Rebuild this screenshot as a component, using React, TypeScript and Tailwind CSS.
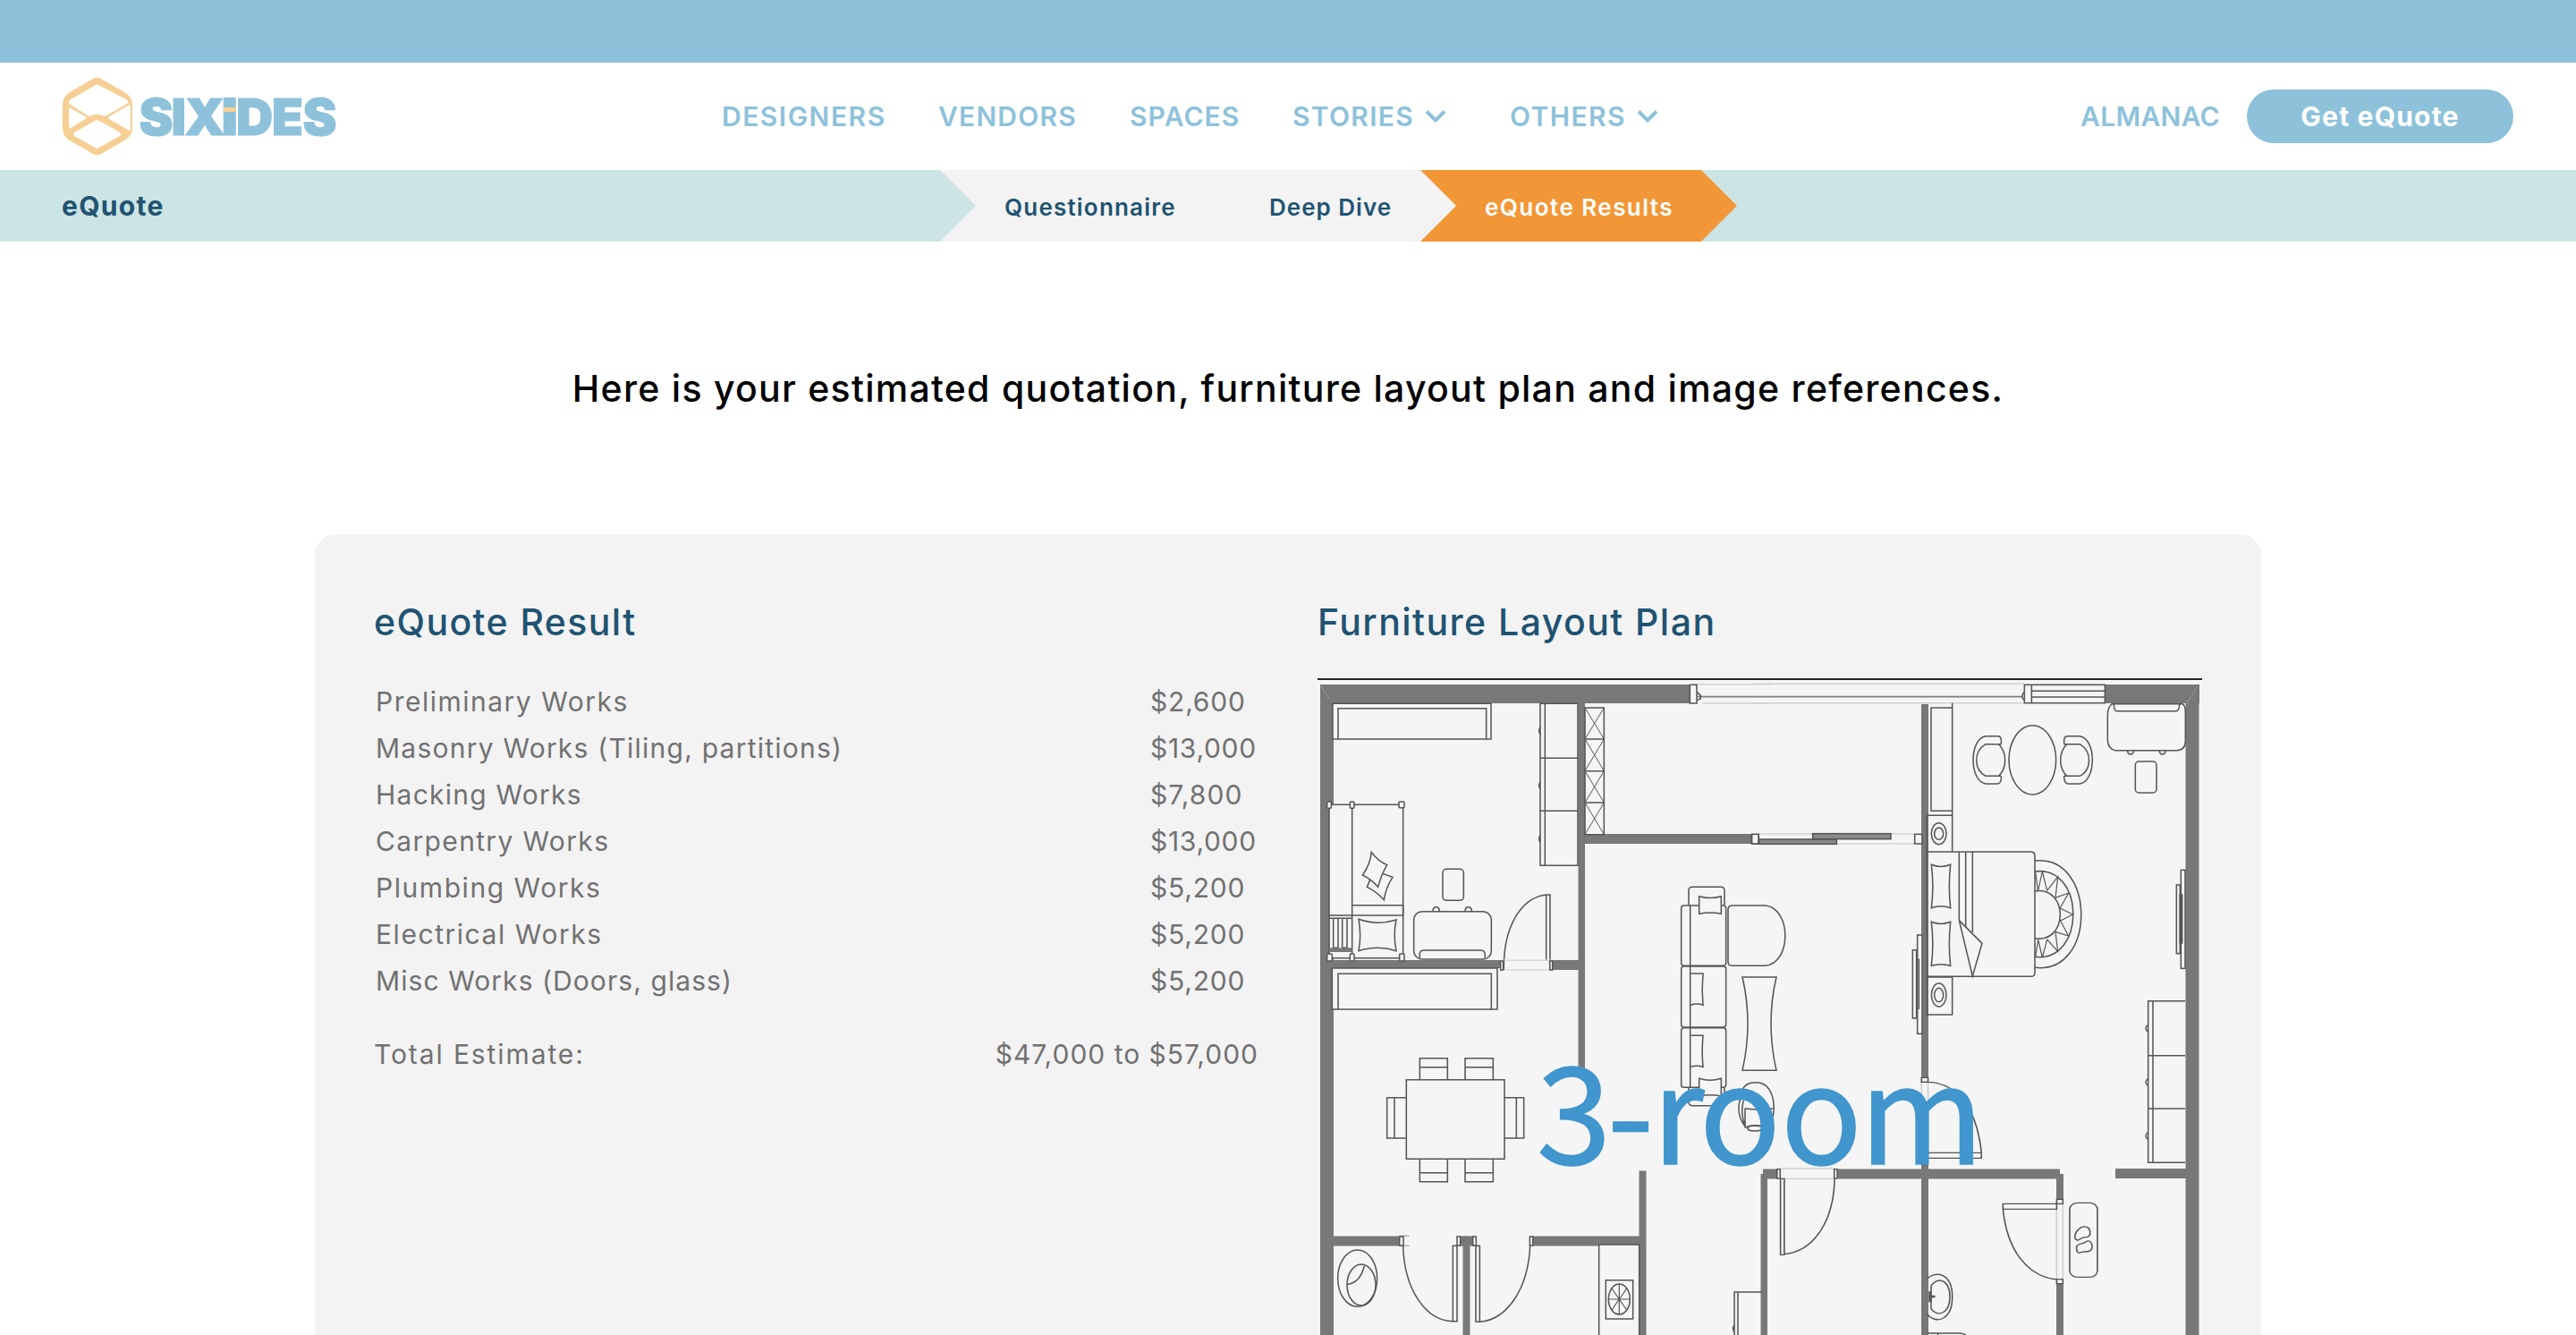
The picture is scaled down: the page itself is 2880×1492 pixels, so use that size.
import React from "react";

const works = [
  { name: "Preliminary Works", nameCls: "tracking-[1.5px]", price: "$2,600", priceCls: "tracking-[0.8px]" },
  { name: "Masonry Works (Tiling, partitions)", nameCls: "tracking-[1.23px]", price: "$13,000", priceCls: "tracking-[0.7px]" },
  { name: "Hacking Works", nameCls: "tracking-[1.25px]", price: "$7,800", priceCls: "tracking-[1.1px]" },
  { name: "Carpentry Works", nameCls: "tracking-[1.35px]", price: "$13,000", priceCls: "tracking-[0.7px]" },
  { name: "Plumbing Works", nameCls: "tracking-[1.55px]", price: "$5,200", priceCls: "tracking-[0.8px]" },
  { name: "Electrical Works", nameCls: "tracking-[1.55px]", price: "$5,200", priceCls: "tracking-[0.8px]" },
  { name: "Misc Works (Doors, glass)", nameCls: "tracking-[1.07px]", price: "$5,200", priceCls: "tracking-[0.8px]" },
];

const nav = [
  { label: "DESIGNERS", cls: "w-[242px] tracking-[1.5px]", menu: false },
  { label: "VENDORS", cls: "w-[214px] tracking-[1.2px]", menu: false },
  { label: "SPACES", cls: "w-[182px] tracking-[1.1px]", menu: false },
  { label: "STORIES", cls: "w-[243px] tracking-[1.3px]", menu: true },
  { label: "OTHERS", cls: "w-[180px] tracking-[1.4px]", menu: true },
];

function Chevron() {
  return (
    <svg width="24" height="16" viewBox="0 0 24 16" fill="none" className="ml-[12px]">
      <path d="M2 2.5 L12 12.5 L22 2.5" stroke="#8dc2da" strokeWidth="4" />
    </svg>
  );
}

function Logo() {
  return (
    <svg width="310" height="90" viewBox="70 85 310 90" className="shrink-0">
      <path
        fillRule="evenodd"
        fill="#f6cf94"
        d="M104 88 Q108.500 85.500 113 88 L140 103.500 Q148 108.500 148 117 V143 Q148 151.500 140 156.500 L113 172 Q108.500 174.500 104 172 L77 156.500 Q70 151.500 70 143 V117 Q70 108.500 77 103.500 Z
        M107 95 L79 111 Q77 112.500 77 114.500 Q77 116 79 117 L97 128.500 Q99 130.300 101.500 129.500 Q108.500 126 115.500 129.500 Q118 130.300 120 128.500 L142 116 Q144 115 143.500 113.500 Q143 112 141 111 L110 95 Q108.500 93.500 107 95 Z
        M77 122 Q77 120 79 121 L95.500 130.300 Q98 131.500 95.500 133 L80 142.500 Q77 144 77 141.500 Z
        M144 117.500 Q146 116.500 146 118.500 V144 Q146 146.500 143.500 145.500 L122 133 Q120 131.500 122 130.300 Z
        M106 135 Q108.500 133.500 111 135 L134 148 Q136 150 134 152 L110.500 165 Q108.500 167 106.500 165 L83 152 Q81 150 83 148 Z"
      />
      <text
        x="155.5 191.5 206.500 248.500 264 304 338.500"
        y="150.500"
        fill="#8dc2da"
        stroke="#8dc2da"
        strokeWidth="1.2"
        fontFamily="Inter, sans-serif"
        fontWeight="900"
        fontSize="57"
      >
        SIXiDES
      </text>
      <path d="M248.500 105 h16.500 v4 h-16.500z" fill="#fff" />
      <path d="M249.700 109 h14 v42 h-14z" fill="#8dc2da" />
      <path d="M249.700 120 h14 v5 h-14z" fill="#f6cf94" />
    </svg>
  );
}

function FloorPlan() {
  return (
    <svg width="989" height="735" viewBox="1473 757 989 735" className="mt-[33px] block">
      <rect x="1473" y="757" width="989" height="735" fill="#f5f5f5" />
      <rect x="1473" y="758" width="989" height="2" fill="#222" />

      {/* walls */}
      <g fill="#787878">
        <rect x="1476" y="765" width="418" height="21" />
        <rect x="1476" y="765" width="15" height="727" />
        <rect x="2353" y="765" width="106" height="21" />
        <rect x="2443.500" y="765" width="15" height="727" />
        <rect x="1764.500" y="786" width="7.500" height="408" />
        <rect x="1772" y="932" width="188" height="11" />
        <rect x="1490" y="1073" width="188" height="9" />
        <rect x="1736" y="1073" width="29" height="11" />
        <rect x="2148" y="787" width="8" height="420" />
        <rect x="1490" y="1381.500" width="77" height="11" />
        <rect x="1631" y="1381.500" width="17" height="11" />
        <rect x="1635.500" y="1381.500" width="8" height="111" />
        <rect x="1713" y="1381.500" width="125" height="11" />
        <rect x="1832.500" y="1308.500" width="8" height="184" />
        <rect x="1971" y="1306.500" width="17" height="11" />
        <rect x="1968.500" y="1312" width="7.500" height="180" />
        <rect x="2055" y="1306.500" width="248" height="11" />
        <rect x="2148" y="1299" width="8" height="193" />
        <rect x="2299" y="1312" width="8" height="28" />
        <rect x="2299" y="1435" width="8" height="57" />
        <rect x="2365" y="1306" width="80" height="11" />
      </g>
      <path d="M1477 767 l9 14 M2457 767 l-13 20" stroke="#9a9a9a" strokeWidth="1" />

      <g transform="translate(1460 650) scale(.333333)" fill="none" stroke="#555" strokeWidth="4.6">
        <path d="M1300 344H1560M1330 408H1560" stroke="#d2d2d2" />
        <path d="M1312 386H1500" stroke="#808080" strokeWidth="5" />
        <path d="M1312 370l12 12v10l-12 6" />
        <rect x="1288" y="346" width="23" height="62" fill="#f5f5f5" />
        <path fill="#f5f5f5" d="M90 409H621V528H90Z" />
        <path d="M108 528V425H605V528" />
        <path fill="#f5f5f5" d="M786 409H912V952H786Z" />
        <path d="M802 409V952M786 592H912M786 769H912M786 488q-8 12 0 24M786 672q-8 12 0 24M786 850q-8 12 0 24" />
        <path d="M936 423H1000V848H936ZM936 528H1000M936 635H1000M936 741H1000" />
        <path strokeWidth="3" d="M936 423L1000 528M1000 423L936 528M936 528L1000 635M1000 528L936 635M936 635L1000 741M1000 635L936 741M936 741L1000 848M1000 741L936 848" />
        <path fill="#f5f5f5" d="M78 748H326V1262H78Z" />
        <path d="M155 748V1262M155 1085H326V1119H155M78 1119H155M78 1129H155" />
        <path d="M92 1129V1228H108V1129M122 1129V1228H138V1129" />
        <rect x="80" y="1228" width="74" height="14" fill="#787878" stroke="none" />
        <g fill="#f5f5f5">
          <rect x="71" y="738" width="14" height="22" rx="3" /><rect x="148" y="738" width="14" height="22" rx="3" /><rect x="312" y="738" width="18" height="20" rx="3" />
          <rect x="71" y="1248" width="17" height="24" rx="3" /><rect x="148" y="1248" width="14" height="24" rx="3" /><rect x="314" y="1248" width="16" height="24" rx="3" />
        </g>
        <path fill="#f5f5f5" d="M215 1000L248 975L291 991Q268 1026 262 1067Q238 1040 205 1024Z" />
        <path fill="#f5f5f5" d="M220 907Q240 936 272 950Q252 985 242 1024Q220 998 190 984Q215 950 220 907Z" />
        <path d="M177 1132Q240 1154 303 1134Q292 1186 303 1238Q240 1218 177 1238Q187 1186 177 1132Z" />
        <rect x="459" y="964" width="70" height="105" rx="12" />
        <rect x="362" y="1106" width="260" height="160" rx="28" />
        <path d="M426 1105q0-14 11-14t11 14M534 1105q0-14 11-14t11 14M382 1262q-4-26 12-26H588q16 0 12 26" />
        <path d="M806 1268V1050H819V1268M806 1050C720 1060 662 1160 664 1300" />
        <path d="M664 1270H820M664 1302H820" stroke="#d8d8d8" />
        <rect x="653" y="1272" width="9" height="30" fill="#f5f5f5" /><rect x="818" y="1272" width="9" height="30" fill="#f5f5f5" />
        <rect x="1495" y="848" width="24" height="31" fill="#f5f5f5" />
      </g>

      <g transform="translate(1960 740) scale(.333333)" fill="none" stroke="#555" strokeWidth="4.6">
        <path d="M0 73H908M0 137H908M18 576H540M18 609H540" stroke="#d2d2d2" />
        <path d="M0 116H900" stroke="#808080" strokeWidth="5" />
        <rect x="910" y="76" width="270" height="61" fill="#f5f5f5" />
        <path d="M934 76V137M934 97H1180M934 117H1180M910 100q-16 15 0 28" />
        <rect x="20" y="594" width="260" height="16" fill="#8a8a8a" /><rect x="200" y="575" width="262" height="18" fill="#8a8a8a" />
        <rect x="542" y="577" width="25" height="32" fill="#f5f5f5" /><rect x="-4" y="577" width="22" height="32" fill="#f5f5f5" />
        <path d="M668 137V635M668 153H597V499H668M583 514H668M583 635V514" />
        <ellipse cx="623" cy="575" rx="25" ry="36" /><ellipse cx="623" cy="575" rx="15" ry="20" />
        <ellipse cx="937" cy="328" rx="79" ry="116" />
        <path d="M824 275H780C736 302 742 362 780 382H824C852 354 852 304 824 275ZM832 275V262Q832 248 820 248H780C724 258 724 398 780 408H820Q834 406 832 382M824 275H832M824 382H832" />
        <path d="M1052 275H1096C1140 302 1134 362 1096 382H1052C1024 354 1024 304 1052 275ZM1043 275V262Q1043 248 1056 248H1096C1152 258 1152 398 1096 408H1056Q1042 406 1043 382M1052 275H1043M1052 382H1043" />
        <path fill="#f5f5f5" d="M1204 140H1440Q1450 145 1450 170V265Q1450 296 1420 296H1215Q1189 290 1189 260V180Q1189 150 1204 140Z" />
        <path d="M1210 140Q1210 164 1220 164H1418Q1430 164 1430 140M1256 297q0 12 10 12t10-12M1363 297q0 12 10 12t10-12" />
        <rect x="1282" y="333" width="71" height="105" rx="12" />
        <path d="M583 636H932Q945 636 945 650V1040Q945 1054 932 1054H583Z" />
        <path d="M691 636V866L736 1053L768 943L691 866M713 636V886M736 636V906" />
        <path d="M598 679Q630 692 662 679Q654 752 662 824Q630 812 598 824Q607 752 598 679ZM598 871Q630 884 662 871Q654 944 662 1018Q630 1008 598 1018Q607 944 598 871Z" />
        <path d="M945 666C1152 644 1152 1050 945 1024M945 702C1116 680 1116 1010 945 988M945 768C1058 750 1058 944 945 926" />
        <path strokeWidth="3.500" d="M947 702L955 766M956 766L970 702L986 766M986 766L1022 720L1014 790M1014 790L1058 774L1028 828M1028 824L1072 846L1030 868M1028 862L1058 918L1014 904M1014 904L1022 970L986 930M986 930L970 990L956 930L947 988" />
        <path d="M583 1056H668V1182H583Z" />
        <ellipse cx="623" cy="1116" rx="25" ry="39" /><ellipse cx="623" cy="1116" rx="15" ry="23" />
        <rect x="551" y="915" width="16" height="331" fill="#f5f5f5" /><rect x="535" y="965" width="13" height="229" /><rect x="549" y="997" width="7" height="164" />
        <rect x="1435" y="697" width="14" height="330" fill="#f5f5f5" /><rect x="1420" y="747" width="12" height="230" /><rect x="1432" y="780" width="7" height="162" />
        <path d="M1449 1136H1325V1678H1449M1341 1136V1678M1325 1319H1449M1325 1497H1449M1325 1216q-16 12 0 24M1325 1396q-16 12 0 24M1325 1576q-16 12 0 24" />
      </g>

      <g transform="translate(1460 1060) scale(.333333)" fill="none" stroke="#555" strokeWidth="4.6">
        <path fill="#f5f5f5" d="M88 66H642V204H88Z" />
        <path d="M108 204V85H622V204M337 440H666V706H337Z" />
        <path d="M382 440V368H475V440M382 398H475M534 440V368H628V440M534 398H628M382 706V782H475V706M382 752H475M534 706V782H628V706M534 752H628M337 500H272V636H337M297 500V636M666 500H731V636H666M706 500V636" />
        <path d="M315 964H347M315 997H347" stroke="#b5b5b5" />
        <path d="M493 997H507V1250H493ZM326 998C330 1140 400 1250 495 1250M570 997H583V1252H570ZM752 997C746 1140 676 1244 583 1252" />
        <g fill="#f5f5f5">
          <rect x="314" y="966" width="13" height="30" /><rect x="507" y="966" width="11" height="30" /><rect x="560" y="966" width="11" height="30" /><rect x="751" y="966" width="10" height="30" />
          <path d="M983 1300V993H1118V1300" />
        </g>
        <ellipse cx="173" cy="1106" rx="66" ry="95" /><ellipse cx="186" cy="1128" rx="48" ry="69" />
        <path d="M196 1064Q182 1122 138 1126M1006 1112H1097V1242H1006Z" />
        <ellipse cx="1051" cy="1176" rx="36" ry="51" />
        <path strokeWidth="3.500" d="M1051 1125V1227M1015 1176H1087M1026 1140L1076 1212M1076 1140L1026 1212" />
        <path d="M1528 1152H1437V1300M1449 1152V1300M1437 1262q-8 12 0 26" />
      </g>

      <g transform="translate(1870 980) scale(.333333)" fill="none" stroke="#555" strokeWidth="4.6">
        <path d="M54 95V46Q54 34 66 34H162Q174 34 174 46V95" />
        <rect x="29" y="96" width="150" height="202" rx="9" /><rect x="29" y="300" width="150" height="204" rx="9" /><rect x="29" y="506" width="150" height="200" rx="9" />
        <path d="M59 96V706M54 707V754Q54 767 66 767H162Q174 767 174 754V707" />
        <path d="M310 96H200Q186 96 186 110V284Q186 298 200 298H310C400 290 400 104 310 96Z" />
        <path fill="#f5f5f5" d="M89 65Q126 76 163 65V124Q126 116 89 124ZM89 676Q126 688 163 676V735Q126 728 89 735Z" />
        <path d="M61 324H102Q97 378 102 430Q82 422 61 430M61 532H102Q97 586 102 637Q82 630 61 637" />
        <path d="M234 336H348Q312 490 348 649H234Q270 490 234 336Z" />
        <path d="M232 716C248 680 308 680 326 716C342 744 344 790 332 814M232 735C212 770 224 814 243 836M238 750C228 780 234 810 243 836M243 776Q290 784 336 776M243 776V842M243 840Q280 826 308 840" />
        <ellipse cx="276" cy="843" rx="25" ry="9" />
      </g>

      <g transform="translate(1960 1060) scale(.382653 .333333)" fill="none" stroke="#555" strokeWidth="4.2">
        <path d="M492 450V690M511 450V690M80 738H238M80 772H238M887 856V1110M905 856V1110" stroke="#cfcfcf" />
        <path d="M511 448C610 452 656 560 667 684M511 685H667V703H511" />
        <path d="M80 772H91V1027H80ZM238 772C236 910 180 1015 91 1025" />
        <path d="M730 856H887V874H730ZM730 874C742 1010 800 1100 887 1110" />
        <g fill="#f5f5f5">
          <rect x="492" y="433" width="19" height="15" /><rect x="70" y="740" width="9" height="31" /><rect x="237" y="740" width="9" height="31" />
          <rect x="887" y="841" width="18" height="15" /><rect x="887" y="1109" width="18" height="15" />
        </g>
        <rect x="925" y="853" width="81" height="249" rx="22" />
        <path d="M940 968C940 948 958 930 970 933C986 934 990 962 976 968C960 966 956 976 950 978Q941 978 940 968ZM945 1000C946 990 966 992 974 982C990 974 996 1006 984 1014C972 1020 962 1014 954 1021Q944 1022 945 1000Z" />
        <path d="M508 1108C532 1080 582 1086 582 1168C582 1250 532 1260 508 1226M520 1132C536 1100 574 1106 575 1168C575 1228 536 1236 520 1208Z" />
        <path d="M517 1150V1186M514 1167H532" strokeWidth="8" />
        <path d="M508 1290H600Q618 1290 624 1300M540 1290V1300" />
      </g>

      <text
        x="1718 1797 1847 1900 1991 2079"
        y="1300.500"
        fill="#4096cd"
        stroke="#4096cd"
        strokeWidth="1.5"
        fontFamily="'Noto Sans CJK SC', sans-serif"
        fontSize="150"
      >
        3-room
      </text>
    </svg>
  );
}

export default function App() {
  return (
    <div className="h-[1492px] w-full overflow-hidden bg-white font-['Inter',sans-serif]">
      <div className="h-[70px] bg-[#8dc2da]" />

      <header className="flex h-[120px] items-center px-[70px] text-[30px] font-semibold text-[#8dc2da]">
        <Logo />
        <nav className="ml-[427px] flex flex-1">
          {nav.map((item) => (
            <a key={item.label} className={`flex items-center whitespace-nowrap ${item.cls}`}>
              {item.label}
              {item.menu && <Chevron />}
            </a>
          ))}
        </nav>
        <a className="mr-[30px] tracking-[0.3px]">ALMANAC</a>
        <button className="h-[60px] w-[298px] rounded-full bg-[#8dc2da] font-bold tracking-[1.2px] text-white">
          Get eQuote
        </button>
      </header>

      <div className="flex h-20 bg-[#cce4e4] text-[26px] font-semibold text-[#205372]">
        <div className="z-10 flex w-[1091px] items-center bg-[#cce4e4] pl-[69px] text-[30px] font-bold tracking-[1.3px] [clip-path:polygon(0_0,1051px_0,100%_50%,1051px_100%,0_100%)]">
          eQuote
        </div>
        <div className="-ml-10 flex w-[577px] items-center bg-[#f3f3f3] pt-[3px]">
          <span className="w-[296px] pl-[72px] tracking-[1.2px]">Questionnaire</span>
          <span className="pl-[72px] tracking-[1px]">Deep Dive</span>
        </div>
        <div className="-ml-10 flex w-[354px] items-center bg-[#f29738] pt-[3px] pl-[72px] tracking-[1.45px] text-white [clip-path:polygon(0_0,314px_0,100%_50%,314px_100%,0_100%,40px_50%)]">
          eQuote Results
        </div>
      </div>

      <h1 className="mt-[134px] text-center text-[41px] leading-[60px] font-medium tracking-[1.26px] text-black">
        Here is your estimated quotation, furniture layout plan and image references.
      </h1>

      <main className="mx-auto mt-[133px] flex h-[1000px] w-[2176px] justify-between rounded-[24px] bg-[#f3f3f3] px-[66px] pt-[68px]">
        <section className="w-[989px] text-[30px] leading-[52px] text-[#717171]">
          <h2 className="text-[41px] leading-[60px] font-medium tracking-[1.4px] text-[#205372]">eQuote Result</h2>
          <ul className="mt-[33px] pl-[2px]">
            {works.map((w) => (
              <li key={w.name} className="flex justify-between">
                <span className={w.nameCls}>{w.name}</span>
                <span className={`w-[121px] ${w.priceCls}`}>{w.price}</span>
              </li>
            ))}
          </ul>
          <div className="mt-[30px] flex justify-between">
            <span className="tracking-[1.9px]">Total Estimate:</span>
            <span className="tracking-[1px]">$47,000 to $57,000</span>
          </div>
        </section>
        <section className="w-[989px]">
          <h2 className="text-[41px] leading-[60px] font-medium tracking-[1.45px] text-[#205372]">Furniture Layout Plan</h2>
          <div className="-mt-px">
            <FloorPlan />
          </div>
        </section>
      </main>
    </div>
  );
}
